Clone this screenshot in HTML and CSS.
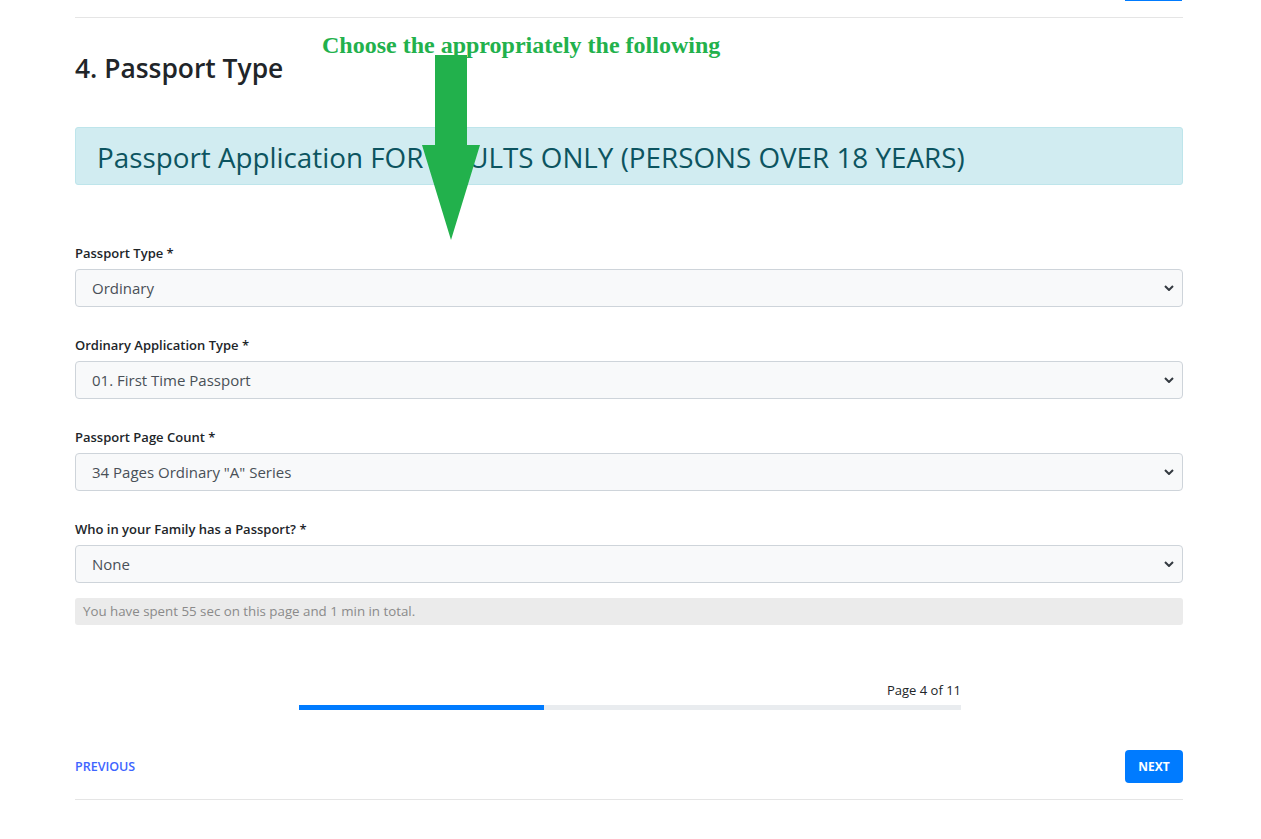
FILE: index.html
```html
<!DOCTYPE html>
<html lang="en">
<head>
<meta charset="utf-8">
<title>Passport Type</title>
<link rel="stylesheet" href="styles.css">
</head>
<body>
<div class="page">
  <div class="top-strip"><span class="top-btn"></span></div>
  <hr class="rule">
  <div class="heading-row">
    <h3 class="title">4. Passport Type</h3>
  </div>
  <div class="alert">Passport Application FOR ADULTS ONLY (PERSONS OVER 18 YEARS)</div>

  <form class="form">
    <div class="field">
      <label class="label">Passport Type *</label>
      <div class="select"><span>Ordinary</span><svg class="chev" viewBox="0 0 10 6" width="10" height="6"><path d="M1 1l4 4 4-4" fill="none" stroke="#343a40" stroke-width="2"/></svg></div>
    </div>
    <div class="field">
      <label class="label">Ordinary Application Type *</label>
      <div class="select"><span>01. First Time Passport</span><svg class="chev" viewBox="0 0 10 6" width="10" height="6"><path d="M1 1l4 4 4-4" fill="none" stroke="#343a40" stroke-width="2"/></svg></div>
    </div>
    <div class="field">
      <label class="label">Passport Page Count *</label>
      <div class="select"><span>34 Pages Ordinary "A" Series</span><svg class="chev" viewBox="0 0 10 6" width="10" height="6"><path d="M1 1l4 4 4-4" fill="none" stroke="#343a40" stroke-width="2"/></svg></div>
    </div>
    <div class="field field-last">
      <label class="label">Who in your Family has a Passport? *</label>
      <div class="select"><span>None</span><svg class="chev" viewBox="0 0 10 6" width="10" height="6"><path d="M1 1l4 4 4-4" fill="none" stroke="#343a40" stroke-width="2"/></svg></div>
    </div>
    <div class="timer">You have spent 55 sec on this page and 1 min in total.</div>
  </form>

  <div class="progress-wrap">
    <div class="progress-text">Page 4 of 11</div>
    <div class="progress"><div class="progress-fill" style="width:37%"></div></div>
  </div>

  <div class="nav">
    <a class="prev">PREVIOUS</a>
    <a class="next">NEXT</a>
  </div>
  <hr class="rule rule-bottom">

  <div class="annotation">Choose the appropriately the following</div>
  <svg class="arrow" width="60" height="190" viewBox="0 0 60 190">
    <path d="M13 0 H45 V90 H58 L29 185 L0 90 H13 Z" fill="#22b14c"/>
  </svg>
</div>
</body>
</html>
```
FILE: styles.css
```css
* { box-sizing: border-box; }
html, body { margin: 0; padding: 0; background: #fff; }
body {
  font-family: "Open Sans", "Noto Sans", sans-serif;
  color: #212529;
}
.page {
  position: relative;
  width: 1108px;
  margin-left: 75px;
}
.top-strip {
  height: 2px;
  display: flex;
  justify-content: flex-end;
}
.top-btn {
  width: 57px;
  height: 1px;
  background: #007bff;
  margin-right: 1px;
}
.rule {
  border: 0;
  border-top: 1px solid #e5e5e5;
  margin: 15px 0 0;
  height: 0;
}
.heading-row { height: 109px; padding-top: 32px; }
.title {
  margin: 0;
  font-size: 26.4px;
  font-weight: 600;
  line-height: 36px;
  color: #212529;
}
.alert {
  height: 58px;
  background: #d1ecf1;
  border: 1px solid #bee5eb;
  border-radius: 3px;
  color: #0c5460;
  font-size: 27.8px;
  line-height: 56px;
  padding: 1px 0 0 21px;
  white-space: nowrap;
}
.form { padding-top: 60px; }
.field { display: flex; flex-direction: column; margin-bottom: 30px; }
.field-last { margin-bottom: 15px; }
.label {
  font-size: 13px;
  font-weight: 600;
  line-height: 18px;
  height: 16px;
  margin-bottom: 8px;
  color: #212529;
  position: relative;
  top: -1px;
}
.select {
  height: 38px;
  background: #f8f9fa;
  border: 1px solid #ced4da;
  border-radius: 4px;
  display: flex;
  align-items: center;
  justify-content: space-between;
  padding: 0 8px 0 16px;
  font-size: 15px;
  color: #495057;
}
.chev { display: block; }
.timer {
  height: 27px;
  background: #ebebeb;
  border-radius: 3px;
  font-size: 13.3px;
  color: #8a8a8a;
  line-height: 27px;
  padding-left: 8px;
}
.progress-wrap {
  width: 662px;
  margin: 55px 0 0 224px;
}
.progress-text {
  text-align: right;
  font-size: 13px;
  line-height: 20px;
  color: #212529;
}
.progress {
  margin-top: 5px;
  height: 5px;
  background: #e9ecef;
}
.progress-fill { height: 100%; background: #007bff; }
.nav {
  margin-top: 40px;
  display: flex;
  justify-content: space-between;
  align-items: center;
  height: 33px;
}
.prev {
  font-size: 12.5px;
  font-weight: 600;
  color: #3e64ff;
}
.next {
  width: 58px;
  height: 33px;
  background: #007bff;
  color: #fff;
  font-size: 12px;
  font-weight: 700;
  border-radius: 4px;
  display: flex;
  align-items: center;
  justify-content: center;
}
.rule-bottom { margin-top: 16px; }
.annotation {
  position: absolute;
  left: 247px;
  top: 32px;
  font-family: "Liberation Serif", "Times New Roman", serif;
  font-weight: 700;
  font-size: 24px;
  color: #22b14c;
  white-space: nowrap;
}
.arrow {
  position: absolute;
  left: 347px;
  top: 55px;
}
```
